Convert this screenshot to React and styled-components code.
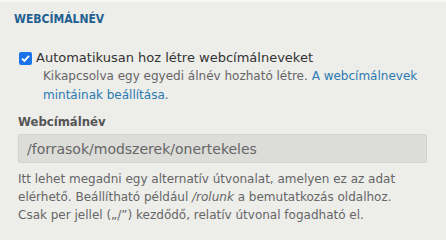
import React from 'react';
import styled, { createGlobalStyle } from 'styled-components';

const GlobalStyle = createGlobalStyle`
    html, body {
        margin: 0;
        padding: 0;
        background: #ededea;
    }
    body {
        font-family: "DejaVu Sans", "Open Sans", sans-serif;
        color: #333;
    }
`;

const Pane = styled.section`
    width: 446px;
    height: 232px;
    box-sizing: border-box;
    background: #ededea;
    border-top: 2px solid #f7f7f5;
    padding: 9px 19px 0 14px;
`;

const Title = styled.h2`
    margin: 0 0 22px;
    font-family: "DejaVu Sans Condensed", "DejaVu Sans", sans-serif;
    font-size: 12px;
    font-weight: bold;
    color: #22608f;
    line-height: 16px;
`;

const CheckRow = styled.label`
    display: flex;
    align-items: center;
    gap: 4px;
    margin-left: 5px;
    font-size: 13px;
    color: #333;
    line-height: 18px;
`;

const Box = styled.span`
    display: inline-flex;
    align-items: center;
    justify-content: center;
    width: 13px;
    height: 13px;
    border-radius: 2px;
    background: #1a73e8;
`;

const Description = styled.div`
    font-size: 12px;
    line-height: ${props => props.lh || 19}px;
    color: #666;
    padding-left: ${props => props.indent || 0}px;
    padding-right: ${props => props.right || 0}px;
    margin-top: ${props => props.top || 0}px;

    a {
        color: #2a7ab0;
        text-decoration: none;
    }

    em {
        font-style: italic;
    }
`;

const FieldLabel = styled.div`
    margin: 8px 0 3px 4px;
    font-family: "DejaVu Sans Condensed", "DejaVu Sans", sans-serif;
    font-size: 13px;
    font-weight: bold;
    color: #555;
    line-height: 18px;
`;

const Input = styled.div`
    box-sizing: border-box;
    height: 29px;
    margin-left: 4px;
    padding: 0 8px;
    display: flex;
    align-items: center;
    background: #dcdcd8;
    border: 1px solid #d2d2ce;
    border-radius: 2px;
    font-size: 14px;
    color: #666;
`;

function Check() {
    return (
        <Box>
            <svg width="11" height="11" viewBox="0 0 12 12">
                <path d="M2.2 6.2 L4.8 8.7 L9.8 3.2" stroke="#fff" strokeWidth="2" fill="none" />
            </svg>
        </Box>
    );
}

export default function App() {
    return (
        <>
            <GlobalStyle />
            <Pane>
                <Title>WEBCÍMÁLNÉV</Title>
                <CheckRow>
                    <Check />
                    Automatikusan hoz létre webcímálneveket
                </CheckRow>
                <Description indent={29}>
                    Kikapcsolva egy egyedi álnév hozható létre. <a href="#">A webcímálnevek mintáinak beállítása</a>.
                </Description>
                <FieldLabel>Webcímálnév</FieldLabel>
                <Input>/forrasok/modszerek/onertekeles</Input>
                <Description indent={4} right={20} top={7} lh={18}>
                    Itt lehet megadni egy alternatív útvonalat, amelyen ez az adat elérhető. Beállítható például <em>/rolunk</em> a bemutatkozás oldalhoz. Csak per jellel („/”) kezdődő, relatív útvonal fogadható el.
                </Description>
            </Pane>
        </>
    );
}
